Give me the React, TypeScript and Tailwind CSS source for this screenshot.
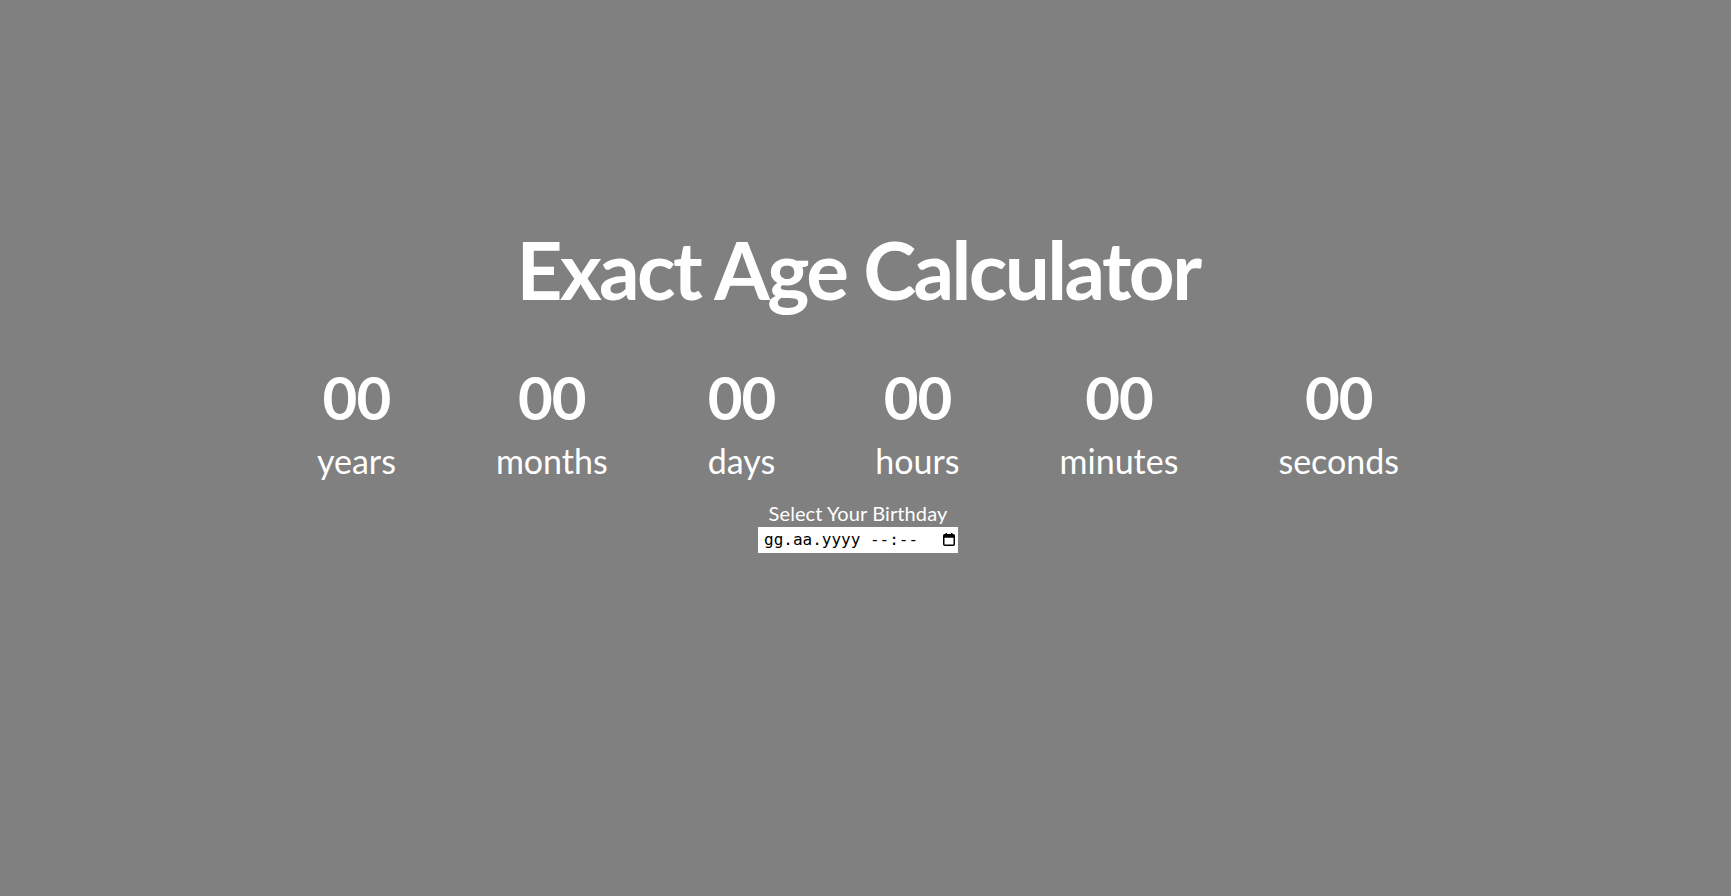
import React from "react";

const UNITS = ["years", "months", "days", "hours", "minutes", "seconds"];

const CalendarIcon = () => (
  <svg width="12" height="13" viewBox="0 0 12 13" fill="none" className="shrink-0">
    <rect x="0.75" y="1.75" width="10.5" height="10.5" rx="1" stroke="#000" strokeWidth="1.5" />
    <rect x="0.75" y="1.75" width="10.5" height="3" fill="#000" />
    <rect x="2.5" y="0" width="1.5" height="3" fill="#000" />
    <rect x="8" y="0" width="1.5" height="3" fill="#000" />
  </svg>
);

export default function App() {
  return (
    <div className="min-h-screen w-full bg-[#808080] text-white font-['Lato',sans-serif] pr-[15px]">
      <div className="flex flex-col items-center pt-[221px]">
        <h1 className="text-[80px] leading-[1.2] font-bold tracking-[-2.6px]">Exact Age Calculator</h1>

        <div className="flex mt-[44px]">
          {UNITS.map((unit) => (
            <div key={unit} className="flex flex-col items-center mx-[50px]">
              <span className="text-[60px] leading-[1.2] font-bold tracking-[-1px]">00</span>
              <span className="text-[34px] leading-[1.2] mt-[8px]">{unit}</span>
            </div>
          ))}
        </div>

        <div className="flex flex-col items-center mt-[19px]">
          <label className="text-[20px] leading-[1.2] tracking-[0.1px]">Select Your Birthday</label>
          <div className="mt-[2px] w-[200px] h-[26px] bg-white flex items-center justify-between pl-[6px] pr-[3px] text-black font-['DejaVu_Sans_Mono',monospace] text-[16px] leading-none">
            <span>gg.aa.yyyy --:--</span>
            <CalendarIcon />
          </div>
        </div>
      </div>
    </div>
  );
}
